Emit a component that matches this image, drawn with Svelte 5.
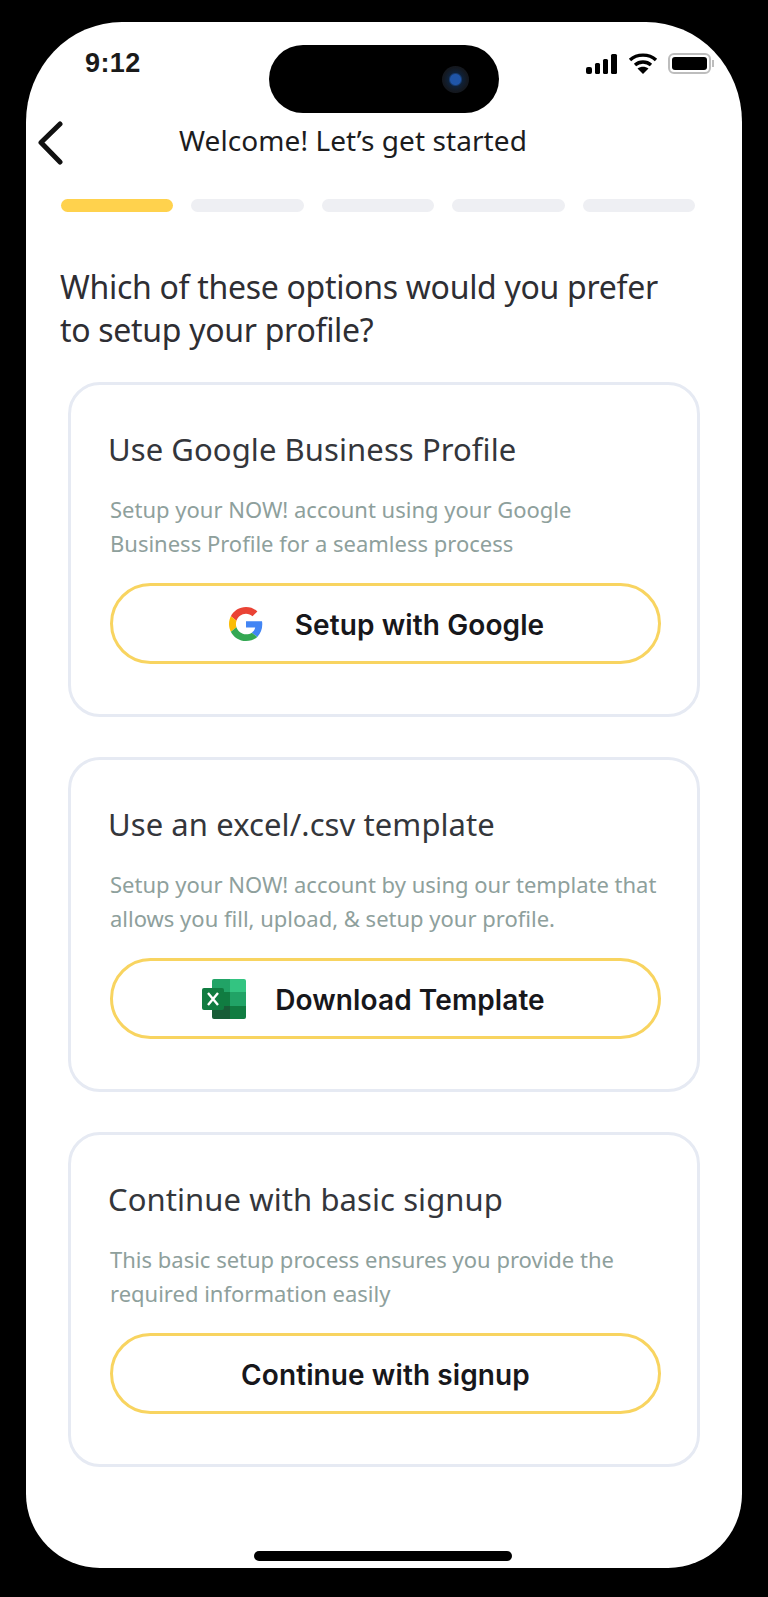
<script>
  const segments = [true, false, false, false, false];
</script>

<div class="page">
  <div class="phone">
    <div class="island"><span class="lens"></span></div>
    <div class="status">
      <span class="time">9:12</span>
      <div class="status-icons">
        <svg width="33" height="20" viewBox="0 0 33 20" fill="#000">
          <rect x="0" y="13" width="6" height="7" rx="2"/>
          <rect x="9" y="9" width="5" height="11" rx="1.5"/>
          <rect x="17" y="5" width="5" height="15" rx="1.5"/>
          <rect x="25" y="0" width="6" height="20" rx="1.5"/>
        </svg>
        <svg class="wifi" width="30" height="22" viewBox="0 0 30 22" fill="none" stroke="#000" stroke-width="3.4">
          <path d="M2 8 C9 1.5 21 1.5 28 8"/>
          <path d="M7 13 C11.5 9 18.5 9 23 13"/>
          <path d="M9.5 16.5 L15 22 L20.5 16.5 C17 14 13 14 9.5 16.5Z" fill="#000" stroke="none"/>
        </svg>
        <div class="battery"><span class="battery-fill"></span></div>
      </div>
    </div>

    <header class="nav">
      <svg class="back" width="28" height="44" viewBox="0 0 28 44" fill="none" stroke="#111" stroke-width="5" stroke-linecap="round" stroke-linejoin="round">
        <path d="M23 3 L4 21.5 L23 41"/>
      </svg>
      <h1>Welcome! Let’s get started</h1>
    </header>

    <div class="progress">
      {#each segments as on}
        <span class="segment" class:on></span>
      {/each}
    </div>

    <h2>Which of these options would you prefer<br />to setup your profile?</h2>

    <div class="cards">
      <section class="card">
        <h3>Use Google Business Profile</h3>
        <p>Setup your NOW! account using your Google<br />Business Profile for a seamless process</p>
        <button class="google">
          <svg width="34" height="34" viewBox="0 0 48 48">
            <path fill="#EA4335" d="M24 9.5c3.5 0 6.7 1.2 9.2 3.6l6.9-6.9C35.9 2.4 30.5 0 24 0 14.6 0 6.5 5.4 2.6 13.2l8 6.2C12.4 13.7 17.7 9.5 24 9.5z"/>
            <path fill="#4285F4" d="M47 24.500c0-1.600-.1-3.100-.4-4.500H24v9h13c-.6 3-2.300 5.500-4.800 7.200l7.700 6c4.500-4.200 7.100-10.300 7.100-17.700z"/>
            <path fill="#FBBC05" d="M10.600 28.600c-.5-1.400-.8-3-.8-4.600s.3-3.200.8-4.600l-8-6.200C.9 16.500 0 20.100 0 24s.9 7.500 2.600 10.800l8-6.200z"/>
            <path fill="#34A853" d="M24 48c6.500 0 11.900-2.100 15.900-5.800l-7.700-6c-2.200 1.500-4.900 2.300-8.200 2.300-6.300 0-11.600-4.200-13.400-9.900l-8 6.200C6.500 42.600 14.600 48 24 48z"/>
          </svg>
          <span>Setup with Google</span>
        </button>
      </section>

      <section class="card">
        <h3>Use an excel/.csv template</h3>
        <p>Setup your NOW! account by using our template that<br />allows you fill, upload, &amp; setup your profile.</p>
        <button class="excel">
          <svg width="44" height="40" viewBox="0 0 44 40">
            <path fill="#21A366" d="M10 2a2 2 0 0 1 2-2h16v13H10z"/>
            <path fill="#33C481" d="M28 0h14a2 2 0 0 1 2 2v11H28z"/>
            <path fill="#107C41" d="M10 13h18v14H10z"/>
            <path fill="#21A366" d="M28 13h16v14H28z"/>
            <path fill="#185C37" d="M10 27h18v13H12a2 2 0 0 1-2-2z"/>
            <path fill="#107C41" d="M28 27h16v11a2 2 0 0 1-2 2H28z"/>
            <rect x="0" y="9" width="22" height="22" rx="2" fill="#107C41"/>
            <path d="M6 14 L16 26 M16 14 L6 26" stroke="#fff" stroke-width="2.4"/>
          </svg>
          <span>Download Template</span>
        </button>
      </section>

      <section class="card">
        <h3>Continue with basic signup</h3>
        <p>This basic setup process ensures you provide the<br />required information easily</p>
        <button><span>Continue with signup</span></button>
      </section>
    </div>

    <div class="home"></div>
  </div>
</div>

<style>
  :global(body) {
    margin: 0;
    background: #000;
  }
  .page {
    width: 768px;
    height: 1597px;
    padding: 22px 26px 29px;
    box-sizing: border-box;
    background: #000;
  }
  .phone {
    position: relative;
    height: 1546px;
    background: #fff;
    border-radius: 96px 96px 74px 74px / 100px 100px 74px 74px;
    font-family: "Noto Sans", sans-serif;
    display: flex;
    flex-direction: column;
    overflow: hidden;
  }
  .island {
    position: absolute;
    left: 243px;
    top: 23px;
    width: 230px;
    height: 68px;
    background: #000;
    border-radius: 34px;
  }
  .lens {
    position: absolute;
    left: 173px;
    top: 21px;
    width: 27px;
    height: 27px;
    border-radius: 50%;
    background: radial-gradient(circle at 50% 50%, #1f55a8 0 5px, #0f2138 7px, #14181f 12px);
  }
  .status {
    height: 56px;
    padding: 0 31px 0 59px;
    display: flex;
    justify-content: space-between;
    align-items: flex-end;
    flex: none;
  }
  .time {
    font-family: "Liberation Sans", sans-serif;
    font-weight: 700;
    font-size: 27px;
    line-height: 30px;
    letter-spacing: 0.4px;
    color: #1a1a1a;
  }
  .status-icons {
    display: flex;
    align-items: flex-end;
    gap: 9px;
    padding-bottom: 4px;
  }
  .battery {
    position: relative;
    margin-left: 1px;
    width: 35px;
    height: 13px;
    border: 2px solid #bdbdbd;
    border-radius: 6px;
    padding: 2px;
    box-sizing: content-box;
    display: flex;
  }
  .battery::after {
    content: "";
    position: absolute;
    right: -5px;
    top: 5px;
    width: 2px;
    height: 7px;
    background: #bdbdbd;
  }
  .battery-fill {
    flex: 1;
    background: #000;
    border-radius: 3px;
  }
  .nav {
    display: flex;
    align-items: center;
    height: 76px;
    margin-top: 24px;
    padding-left: 11px;
    flex: none;
  }
  .back {
    flex: none;
    margin-top: 6px;
  }
  h1 {
    margin: 0 0 0 114px;
    font-size: 28px;
    font-weight: 400;
    letter-spacing: 0.08px;
    color: #1c1c1e;
    white-space: nowrap;
  }
  .progress {
    display: flex;
    gap: 18px;
    margin: 21px 47px 0 35px;
    flex: none;
  }
  .segment {
    flex: 1;
    height: 13px;
    border-radius: 7px;
    background: #eeeff3;
  }
  .segment.on {
    background: #ffd24d;
  }
  h2 {
    margin: 53px 0 0 34px;
    font-size: 32px;
    line-height: 43px;
    font-weight: 400;
    color: #2e2e33;
    letter-spacing: -0.3px;
    white-space: nowrap;
  }
  .cards {
    margin: 31px 42px 0;
    display: flex;
    flex-direction: column;
    gap: 40px;
  }
  .card {
    box-sizing: border-box;
    height: 335px;
    border: 3px solid #e6eaf3;
    border-radius: 32px;
    padding: 43px 39px 0 39px;
    display: flex;
    flex-direction: column;
  }
  h3 {
    margin: 0 0 0 -2px;
    font-size: 31px;
    line-height: 42px;
    font-weight: 400;
    letter-spacing: 0.08px;
    color: #34363b;
    white-space: nowrap;
  }
  p {
    margin: 22px 0 0;
    font-size: 22px;
    line-height: 34px;
    color: #8ea09c;
    white-space: nowrap;
  }
  button {
    margin-top: 23px;
    height: 81px;
    width: 551px;
    box-sizing: border-box;
    border: 3px solid #f8d460;
    border-radius: 41px;
    background: #fff;
    display: flex;
    align-items: center;
    justify-content: center;
    gap: 29px;
    font-family: "Inter", sans-serif;
    font-size: 28px;
    font-weight: 600;
    letter-spacing: 0.1px;
    color: #17171b;
    padding: 2px 0 0;
  }
  button svg {
    margin-top: -2px;
  }
  button.google {
    gap: 32px;
    padding-left: 2px;
  }
  button.excel {
    padding-right: 24px;
  }
  .home {
    position: absolute;
    left: 228px;
    bottom: 7px;
    width: 258px;
    height: 10px;
    background: #000;
    border-radius: 5px;
  }
</style>
